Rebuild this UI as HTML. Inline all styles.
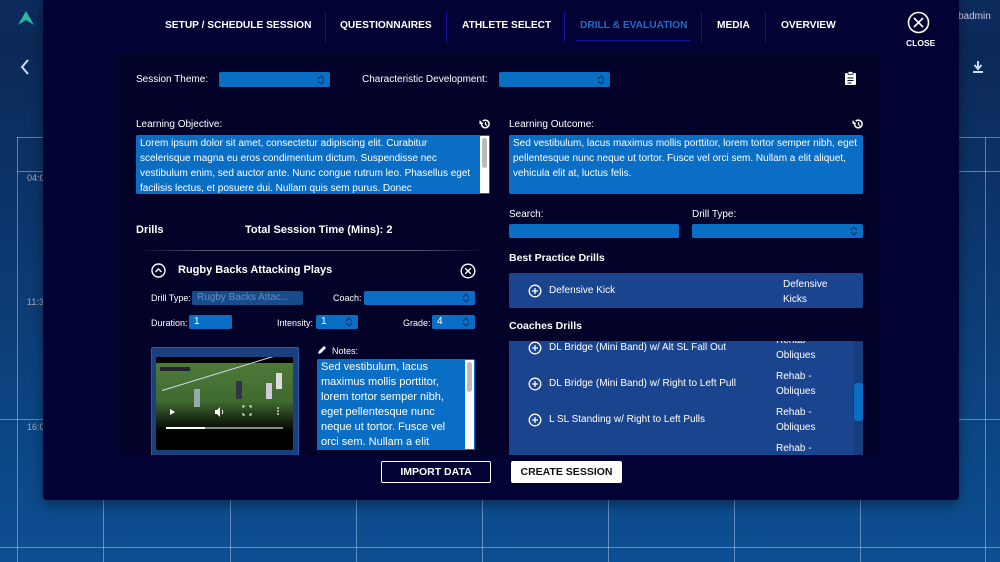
<!DOCTYPE html>
<html><head><meta charset="utf-8"><style>
*{box-sizing:border-box;margin:0;padding:0}
body{width:1000px;height:562px;overflow:hidden;position:relative;font-family:"Liberation Sans",Arial,sans-serif;background:linear-gradient(180deg,#0b2552 0%,#0c3a72 50%,#0c4f92 100%);color:#fff}
.a{position:absolute}
.lbl{font-size:10px;color:#fff;position:absolute;white-space:nowrap}
.b{font-weight:bold}
.sel{position:absolute;background:#0a6ec4;border-radius:2px}
.arr{position:absolute;right:5px;top:50%;margin-top:-5px;width:8px;height:10px}
.ta{position:absolute;background:#0a6ec4;border-radius:2px;font-size:10px;line-height:15px;padding:1px 4px;color:#fff;overflow:hidden}
.sb{position:absolute;right:1px;top:1px;bottom:1px;width:9px;background:#fff}
.sb i{position:absolute;left:2px;top:2px;width:5px;height:30px;background:#bbb;border-radius:3px}
.tab{position:absolute;top:20px;font-size:10.2px;font-weight:bold;white-space:nowrap}
.sep{position:absolute;top:12px;width:1px;height:30px;background:#12129a}
.vl{position:absolute;top:0;bottom:0;width:1px;background:rgba(200,220,255,.45)}
.hl{position:absolute;left:0;right:0;height:1px;background:rgba(200,220,255,.45)}
.btn{position:absolute;display:flex;align-items:center;justify-content:center;font-weight:bold;font-size:10.5px;border-radius:2px}
</style></head><body>
<div class="a" style="left:0;top:0;width:1000px;height:34px;background:#0c2a5c"></div>
<div class="a" style="left:17px;top:137px;width:983px;height:425px;border-left:1px solid rgba(200,220,255,.45)"></div>
<div class="hl" style="top:137px;left:17px"></div>
<div class="hl" style="top:171px;left:17px"></div>
<div class="hl" style="top:419px;left:0"></div>
<div class="hl" style="top:547px;left:0"></div>
<div class="vl" style="left:103px;top:450px"></div><div class="vl" style="left:230px;top:450px"></div><div class="vl" style="left:356px;top:450px"></div><div class="vl" style="left:482px;top:450px"></div><div class="vl" style="left:608px;top:450px"></div><div class="vl" style="left:734px;top:450px"></div><div class="vl" style="left:860px;top:450px"></div><div class="vl" style="left:985px;top:137px"></div>
<div class="lbl" style="left:27px;top:173px;font-size:9px;color:#aab">04:0</div>
<div class="lbl" style="left:27px;top:297px;font-size:9px;color:#aab">11:3</div>
<div class="lbl" style="left:27px;top:422px;font-size:9px;color:#aab">16:0</div>
<svg class="a" style="left:17px;top:10px" width="18" height="16"><path d="M9 1 L17 15 L9 10 L1 15Z" fill="#2ab8a0"/></svg>
<svg class="a" style="left:19px;top:58px" width="12" height="18"><path d="M9 2 L3 9 L9 16" stroke="#cde" stroke-width="2" fill="none"/></svg>
<div class="lbl" style="left:958px;top:11px;color:#ccd">badmin</div>
<svg class="a" style="left:972px;top:60px" width="12" height="14"><path d="M6 1v7M2.5 5l3.5 4 3.5-4M1 12h10" stroke="#cde" stroke-width="2" fill="none"/></svg>
<div class="a" style="left:956px;top:0;width:3px;height:240px;background:#fff"></div>

<div class="a" style="left:43px;top:0;width:916px;height:500px;background:#020234;border-radius:0 0 4px 4px;box-shadow:0 4px 12px rgba(0,0,0,.4)"></div>
<div class="tab" style="left:165px">SETUP / SCHEDULE SESSION</div>
<div class="sep" style="left:325px"></div>
<div class="tab" style="left:340px">QUESTIONNAIRES</div>
<div class="sep" style="left:446px"></div>
<div class="tab" style="left:462px">ATHLETE SELECT</div>
<div class="sep" style="left:564px"></div>
<div class="tab" style="left:580px;color:#1a6fc8">DRILL &amp; EVALUATION</div>
<div class="a" style="left:575px;top:40px;width:115px;height:1px;background:#12129a"></div>
<div class="sep" style="left:701px"></div>
<div class="tab" style="left:717px">MEDIA</div>
<div class="sep" style="left:765px"></div>
<div class="tab" style="left:781px">OVERVIEW</div>
<svg class="a" style="left:907px;top:11px" width="23" height="23"><circle cx="11.5" cy="11.5" r="10" stroke="#fff" stroke-width="1.6" fill="none"/><path d="M7 7l9 9M16 7l-9 9" stroke="#fff" stroke-width="1.6"/></svg>
<div class="lbl b" style="left:906px;top:38px;font-size:8.5px">CLOSE</div>

<div class="a" style="left:118px;top:54px;width:764px;height:401px;background:#03032a"></div>
<div class="lbl" style="left:136px;top:74px">Session Theme:</div>
<div class="sel" style="left:219px;top:72px;width:111px;height:15px"><svg class="arr" viewBox="0 0 8 10"><path d="M1 4l3-3 3 3M1 6l3 3 3-3" stroke="#0a3e7a" stroke-width="1.3" fill="none"/></svg></div>
<div class="lbl" style="left:362px;top:74px">Characteristic Development:</div>
<div class="sel" style="left:499px;top:72px;width:111px;height:15px"><svg class="arr" viewBox="0 0 8 10"><path d="M1 4l3-3 3 3M1 6l3 3 3-3" stroke="#0a3e7a" stroke-width="1.3" fill="none"/></svg></div>
<svg class="a" style="left:844px;top:71px" width="13" height="15"><rect x="1" y="2" width="11" height="12" rx="1" fill="#fff"/><rect x="4" y="0.5" width="5" height="3" rx="1" fill="#fff" stroke="#03032a" stroke-width=".8"/><path d="M3.5 7h6M3.5 9.5h6M3.5 12h4" stroke="#03032a" stroke-width="1"/></svg>

<div class="lbl" style="left:136px;top:119px">Learning Objective:</div>
<svg class="a" style="left:479px;top:118px" width="12" height="12"><path d="M2.5 6a3.8 3.8 0 1 0 1.2-2.8" stroke="#fff" stroke-width="1.5" fill="none"/><path d="M1 2.5v3h3" fill="#fff" stroke="#fff" stroke-width="1"/><path d="M6.5 4v2.5l1.5 1" stroke="#fff" stroke-width="1.2" fill="none"/></svg>
<div class="ta" style="left:136px;top:135px;width:354px;height:59px;padding-right:14px">Lorem ipsum dolor sit amet, consectetur adipiscing elit. Curabitur scelerisque magna eu eros condimentum dictum. Suspendisse nec vestibulum enim, sed auctor ante. Nunc congue rutrum leo. Phasellus eget facilisis lectus, et posuere dui. Nullam quis sem purus. Donec<div class="sb"><i></i></div></div>

<div class="lbl" style="left:509px;top:119px">Learning Outcome:</div>
<svg class="a" style="left:852px;top:118px" width="12" height="12"><path d="M2.5 6a3.8 3.8 0 1 0 1.2-2.8" stroke="#fff" stroke-width="1.5" fill="none"/><path d="M1 2.5v3h3" fill="#fff" stroke="#fff" stroke-width="1"/><path d="M6.5 4v2.5l1.5 1" stroke="#fff" stroke-width="1.2" fill="none"/></svg>
<div class="ta" style="left:509px;top:135px;width:354px;height:59px">Sed vestibulum, lacus maximus mollis porttitor, lorem tortor semper nibh, eget pellentesque nunc neque ut tortor. Fusce vel orci sem. Nullam a elit aliquet, vehicula elit at, luctus felis.</div>

<div class="lbl b" style="left:136px;top:224px;font-size:11px">Drills</div>
<div class="lbl b" style="left:245px;top:224px;font-size:11px">Total Session Time (Mins): 2</div>
<div class="a" style="left:136px;top:250px;width:350px;height:1px;background:linear-gradient(90deg,transparent,#555a70 20%,#555a70 80%,transparent)"></div>

<svg class="a" style="left:151px;top:263px" width="15" height="15"><circle cx="7.5" cy="7.5" r="6.5" stroke="#fff" stroke-width="1.4" fill="none"/><path d="M4.5 9l3-3 3 3" stroke="#fff" stroke-width="1.4" fill="none"/></svg>
<div class="lbl b" style="left:178px;top:264px;font-size:11px">Rugby Backs Attacking Plays</div>
<svg class="a" style="left:460px;top:263px" width="16" height="16"><circle cx="8" cy="8" r="6.8" stroke="#fff" stroke-width="1.4" fill="none"/><path d="M5.2 5.2l5.6 5.6M10.8 5.2l-5.6 5.6" stroke="#fff" stroke-width="1.4"/></svg>

<div class="lbl" style="left:151px;top:293px;font-size:9px">Drill Type:</div>
<div class="sel" style="left:192px;top:291px;width:111px;height:14px;background:#174c8c;color:#6a8ab8;font-size:10px;padding:1px 5px;white-space:nowrap;overflow:hidden">Rugby Backs Attac...</div>
<div class="lbl" style="left:333px;top:293px;font-size:9px">Coach:</div>
<div class="sel" style="left:364px;top:291px;width:111px;height:14px"><svg class="arr" viewBox="0 0 8 10"><path d="M1 4l3-3 3 3M1 6l3 3 3-3" stroke="#0a3e7a" stroke-width="1.3" fill="none"/></svg></div>

<div class="lbl" style="left:151px;top:318px;font-size:9px">Duration:</div>
<div class="sel" style="left:189px;top:315px;width:43px;height:14px;font-size:10px;padding:1px 5px">1</div>
<div class="lbl" style="left:277px;top:318px;font-size:9px">Intensity:</div>
<div class="sel" style="left:316px;top:315px;width:42px;height:14px;font-size:10px;padding:1px 5px">1<svg class="arr" viewBox="0 0 8 10"><path d="M1 4l3-3 3 3M1 6l3 3 3-3" stroke="#0a3e7a" stroke-width="1.3" fill="none"/></svg></div>
<div class="lbl" style="left:403px;top:318px;font-size:9px">Grade:</div>
<div class="sel" style="left:432px;top:315px;width:43px;height:14px;font-size:10px;padding:1px 5px">4<svg class="arr" viewBox="0 0 8 10"><path d="M1 4l3-3 3 3M1 6l3 3 3-3" stroke="#0a3e7a" stroke-width="1.3" fill="none"/></svg></div>

<div class="a" style="left:151px;top:347px;width:148px;height:108px;background:#1c3f80;border:1px solid #2f5aa0;border-bottom:none;border-radius:2px 2px 0 0"></div>
<div class="a" style="left:156px;top:357px;width:137px;height:93px;background:#000;border-radius:2px;overflow:hidden">
 <div class="a" style="left:0;top:6px;width:137px;height:70px;background:linear-gradient(180deg,#4d7a3a 0%,#3f6a30 55%,#1a2a14 80%,#000 100%)"></div>
 <div class="a" style="left:6px;top:33px;width:140px;height:1px;background:#cde;transform:rotate(-17deg);transform-origin:0 0"></div>
 <div class="a" style="left:4px;top:10px;width:30px;height:4px;background:#223"></div>
 <div class="a" style="left:38px;top:32px;width:6px;height:18px;background:#9aa"></div>
 <div class="a" style="left:80px;top:24px;width:6px;height:18px;background:#334"></div>
 <div class="a" style="left:120px;top:16px;width:6px;height:16px;background:#ddd"></div>
 <div class="a" style="left:110px;top:26px;width:6px;height:16px;background:#ccd"></div>
 <svg class="a" style="left:0;top:0" width="137" height="93"><path d="M14 52l5 3-5 3z" fill="#fff"/><path d="M59 53h2l3-3v10l-3-3h-2z" fill="#fff"/><path d="M66 53a3 3 0 0 1 0 4" stroke="#fff" fill="none"/><path d="M87 51v-2h2M93 49h2v2M95 56v2h-2M89 58h-2v-2" stroke="#fff" fill="none"/><circle cx="122" cy="51" r=".9" fill="#fff"/><circle cx="122" cy="54" r=".9" fill="#fff"/><circle cx="122" cy="57" r=".9" fill="#fff"/><rect x="10" y="70" width="117" height="2" fill="#888"/><rect x="10" y="70" width="39" height="2" fill="#fff"/></svg>
</div>

<svg class="a" style="left:317px;top:346px" width="9" height="9"><path d="M1 8l1-3 5-5 2 2-5 5z" fill="#fff"/></svg>
<div class="lbl" style="left:332px;top:346px;font-size:9px">Notes:</div>
<div class="ta" style="left:317px;top:359px;width:158px;height:91px;padding-right:14px;border-radius:2px 2px 0 0;font-size:11px">Sed vestibulum, lacus maximus mollis porttitor, lorem tortor semper nibh, eget pellentesque nunc neque ut tortor. Fusce vel orci sem. Nullam a elit<div class="sb"><i></i></div></div>

<div class="lbl" style="left:509px;top:209px">Search:</div>
<div class="sel" style="left:509px;top:224px;width:170px;height:14px"></div>
<div class="lbl" style="left:692px;top:209px">Drill Type:</div>
<div class="sel" style="left:692px;top:224px;width:171px;height:14px"><svg class="arr" viewBox="0 0 8 10"><path d="M1 4l3-3 3 3M1 6l3 3 3-3" stroke="#0a3e7a" stroke-width="1.3" fill="none"/></svg></div>

<div class="lbl b" style="left:509px;top:252px;font-size:10.5px">Best Practice Drills</div>
<div class="a" style="left:509px;top:273px;width:354px;height:35px;background:#1b448e;border-radius:2px"></div>
<svg class="a" style="left:528px;top:284px" width="14" height="14"><circle cx="7" cy="7" r="5.8" stroke="#fff" stroke-width="1.3" fill="none"/><path d="M7 4v6M4 7h6" stroke="#fff" stroke-width="1.3"/></svg>
<div class="lbl" style="left:549px;top:285px">Defensive Kick</div>
<div class="lbl" style="left:783px;top:277px;line-height:15px">Defensive<br>Kicks</div>

<div class="lbl b" style="left:509px;top:320px;font-size:10.5px">Coaches Drills</div>
<div class="a" style="left:509px;top:341px;width:354px;height:114px;background:#1b448e;overflow:hidden">
 <div class="a" style="right:0;top:0;width:10px;height:114px;background:#183d7e"></div>
 <div class="a" style="right:0;top:42px;width:9px;height:38px;background:#0a6ec4;border-radius:3px"></div>
 <div class="lbl" style="left:267px;top:-8px;line-height:15px">Rehab -<br>Obliques</div>
 <div class="lbl" style="left:267px;top:28px;line-height:15px">Rehab -<br>Obliques</div>
 <div class="lbl" style="left:267px;top:64px;line-height:15px">Rehab -<br>Obliques</div>
 <div class="lbl" style="left:267px;top:100px;line-height:15px">Rehab -<br>Obliques</div>
 <svg class="a" style="left:19px;top:0px" width="14" height="14"><circle cx="7" cy="7" r="5.8" stroke="#fff" stroke-width="1.3" fill="none"/><path d="M7 4v6M4 7h6" stroke="#fff" stroke-width="1.3"/></svg>
 <div class="lbl" style="left:40px;top:1px">DL Bridge (Mini Band) w/ Alt SL Fall Out</div>
 <svg class="a" style="left:19px;top:36px" width="14" height="14"><circle cx="7" cy="7" r="5.8" stroke="#fff" stroke-width="1.3" fill="none"/><path d="M7 4v6M4 7h6" stroke="#fff" stroke-width="1.3"/></svg>
 <div class="lbl" style="left:40px;top:37px">DL Bridge (Mini Band) w/ Right to Left Pull</div>
 <svg class="a" style="left:19px;top:72px" width="14" height="14"><circle cx="7" cy="7" r="5.8" stroke="#fff" stroke-width="1.3" fill="none"/><path d="M7 4v6M4 7h6" stroke="#fff" stroke-width="1.3"/></svg>
 <div class="lbl" style="left:40px;top:73px">L SL Standing w/ Right to Left Pulls</div>
</div>

<div class="btn" style="left:381px;top:461px;width:110px;height:22px;border:1.5px solid #fff">IMPORT DATA</div>
<div class="btn" style="left:511px;top:461px;width:111px;height:22px;background:#fff;color:#111">CREATE SESSION</div>
</body></html>
